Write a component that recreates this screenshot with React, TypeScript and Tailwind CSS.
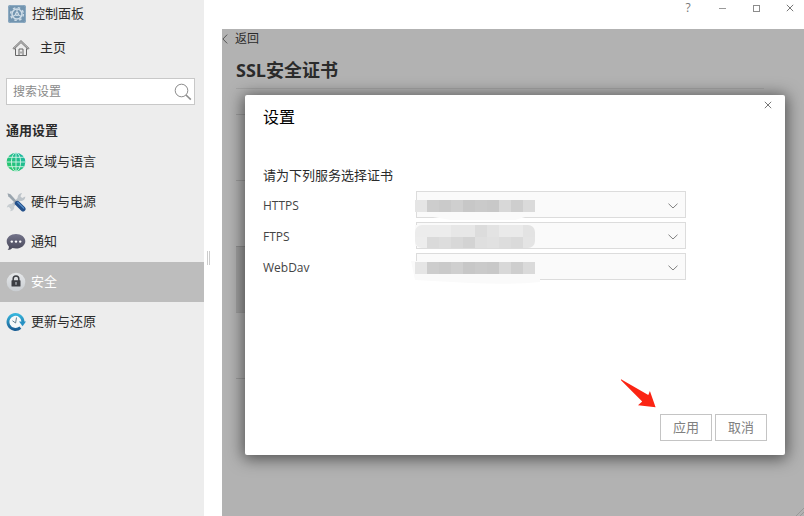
import React from "react";

function PanelIcon() {
  return (
    <svg className="size-[18px] shrink-0" viewBox="0 0 18 18" aria-hidden="true">
      <rect width="18" height="18" rx="2" fill="#7395b0" />
      <rect x="0.5" y="0.5" width="17" height="17" rx="2" fill="none" stroke="#8eabc2" />
      <g fill="none" stroke="#cfdde8">
        <circle cx="9" cy="9" r="5" strokeWidth="1.5" />
        <circle cx="9" cy="9" r="6.4" strokeWidth="1.4" strokeDasharray="2.5 2.53" />
        <path d="M9 9V4M9 9l-4.3 2.5M9 9l4.3 2.5" strokeWidth="1.1" />
      </g>
      <circle cx="9" cy="9" r="1.9" fill="#dbe6ee" />
      <circle cx="9" cy="9" r="0.8" fill="#5d84a4" />
    </svg>
  );
}

function HomeIcon() {
  return (
    <svg className="size-[18px] shrink-0" viewBox="0 0 18 18" fill="none" stroke="#666" strokeWidth="1" aria-hidden="true">
      <path d="M1 9.400 9 1.600l8 7.800-.9.900L9 3.500l-7.100 6.800z" />
      <path d="M3.500 9.500v7h3.500V10h4v6.500h3.500v-7M7 16.500h4M9 12.500v2" />
    </svg>
  );
}

function SearchIcon() {
  return (
    <svg className="mr-0.5 size-[18px] shrink-0" viewBox="0 0 18 18" fill="none" stroke="#8c8c8c" aria-hidden="true">
      <circle cx="7.5" cy="7.5" r="6.300" />
      <path d="m12 12 4.800 4.600" strokeWidth="1.600" />
    </svg>
  );
}

function GlobeIcon() {
  return (
    <svg className="size-5 shrink-0" viewBox="0 0 20 20" aria-hidden="true">
      <defs>
        <linearGradient id="globe" x1="0" y1="1" x2="1" y2="0">
          <stop offset="0" stopColor="#2bcb60" />
          <stop offset="1" stopColor="#1bb5ab" />
        </linearGradient>
      </defs>
      <circle cx="10" cy="10" r="9.300" fill="url(#globe)" />
      <g fill="none" stroke="#d5f3e6" strokeWidth="0.900">
        <ellipse cx="10" cy="10" rx="4.600" ry="9.300" />
        <path d="M10 .7v18.600M.7 10h18.600M2.200 5.300h15.600M2.200 14.700h15.600" />
      </g>
    </svg>
  );
}

function ToolsIcon() {
  return (
    <svg className="size-5 shrink-0" viewBox="0 0 20 20" aria-hidden="true">
      <path d="m4 16 10-10" stroke="#bcc3c9" strokeWidth="3.200" />
      <path d="M11.800 7c-.6-2.900 1.100-5.500 4.200-5.900l-1.600 3.100 1.700 1.700 3.200-1.400c.1 3-2.500 5-5.300 4.200z" fill="#bcc3c9" />
      <path d="M6.800 11.900c-2.900-.8-5.700.9-6 3.600l2.900-.8 1.500 1.600-1 2.900c2.800-.3 4.700-2.800 3.900-5.300z" fill="#c8ced2" />
      <path d="m1.500 1.300 3 1 7.200 7.900-1.700 1.700L2.300 4.300z" fill="#9aa5ae" />
      <path d="m11.300 11.300 5.700 5.600" stroke="#24508a" strokeWidth="5" strokeLinecap="round" />
      <path d="m11.800 10.400 5.900 5.700" stroke="#5a92cc" strokeWidth="1.300" strokeLinecap="round" />
    </svg>
  );
}

function ChatIcon() {
  return (
    <svg className="size-5 shrink-0" viewBox="0 0 20 20" aria-hidden="true">
      <defs>
        <linearGradient id="chat" x1="0" y1="0" x2="0" y2="1">
          <stop offset="0" stopColor="#73738a" />
          <stop offset="1" stopColor="#484859" />
        </linearGradient>
      </defs>
      <path d="M10 2c5.200 0 9.300 3.200 9.300 7.300s-4.100 7.300-9.300 7.300c-1.300 0-2.500-.2-3.600-.5C5.300 17.400 3.500 18.200 1.500 18.100c1.100-1 1.500-2.200 1.400-3.700C1.500 13 .7 11.300.7 9.300.7 5.200 4.800 2 10 2z" fill="url(#chat)" />
      <g fill="#fff">
        <circle cx="5.800" cy="9.600" r="1.200" />
        <circle cx="10" cy="9.600" r="1.200" />
        <circle cx="14.200" cy="9.600" r="1.200" />
      </g>
    </svg>
  );
}

function LockIcon() {
  return (
    <svg className="size-5 shrink-0" viewBox="0 0 20 20" aria-hidden="true">
      <defs>
        <linearGradient id="lock" x1="0" y1="0" x2="0" y2="1">
          <stop offset="0" stopColor="#e6e8ea" />
          <stop offset="1" stopColor="#c9cdd1" />
        </linearGradient>
      </defs>
      <circle cx="10" cy="10" r="9.300" fill="url(#lock)" />
      <path d="M7.200 9V6.800a2.800 2.800 0 0 1 5.600 0V9" fill="none" stroke="#3b3d42" strokeWidth="1.500" />
      <rect x="5.500" y="8.200" width="9" height="6.400" rx="0.600" fill="#3b3d42" />
      <path d="M10 10v2.800" stroke="#aeb2b8" strokeWidth="1.300" />
    </svg>
  );
}

function RestoreIcon() {
  return (
    <svg className="size-5 shrink-0" viewBox="0 0 20 20" aria-hidden="true">
      <defs>
        <linearGradient id="restore" x1="0" y1="0" x2="0" y2="1">
          <stop offset="0" stopColor="#35b4dc" />
          <stop offset="1" stopColor="#1c5f95" />
        </linearGradient>
      </defs>
      <circle cx="9.500" cy="10" r="6.500" fill="#f6f8f9" />
      <path d="M14.400 15.600A7.500 7.500 0 1 1 17 10" fill="none" stroke="url(#restore)" strokeWidth="2.900" />
      <path d="M13 9.600h7l-3.400 4.600z" fill="#2791c4" />
      <path d="M10.500 5.500 9.600 11 6.500 8.800" fill="none" stroke="#64808f" strokeWidth="1" />
    </svg>
  );
}

function CloseGlyph() {
  return (
    <svg className="size-2" viewBox="0 0 8 8" fill="none" stroke="#777" aria-hidden="true">
      <path d="m.8.8 6.400 6.400M7.200.8.8 7.200" />
    </svg>
  );
}

const sections = [
  { label: "区域与语言", icon: <GlobeIcon /> },
  { label: "硬件与电源", icon: <ToolsIcon /> },
  { label: "通知", icon: <ChatIcon /> },
  { label: "安全", icon: <LockIcon />, active: true },
  { label: "更新与还原", icon: <RestoreIcon /> },
];

function Sidebar() {
  return (
    <aside className="w-[204px] shrink-0 bg-[#ededed]">
      <div className="flex h-7 items-center gap-1.5 pl-2">
        <PanelIcon />
        <span>控制面板</span>
      </div>
      <a href="#home" className="flex h-10 items-center gap-2.5 pl-3">
        <HomeIcon />
        <span>主页</span>
      </a>
      <label className="mt-2.5 mr-[9px] ml-1.5 flex h-[27px] items-center border border-[#c8c8c8] bg-white pl-1.5">
        <input
          type="text"
          aria-label="搜索设置"
          placeholder="搜索设置"
          className="min-w-0 flex-1 bg-transparent text-xs outline-none placeholder:text-[#8a8a8a]"
        />
        <SearchIcon />
      </label>
      <h2 className="mt-[15px] h-5 pl-1.5 font-semibold leading-5">通用设置</h2>
      <nav className="pt-0.5">
        {sections.map((s) => (
          <a
            key={s.label}
            href="#section"
            aria-current={s.active ? "page" : undefined}
            className={
              s.active
                ? "flex h-10 items-center gap-[5px] bg-[#bdbdbd] pl-1.5 text-white"
                : "flex h-10 items-center gap-[5px] pl-1.5"
            }
          >
            {s.icon}
            <span>{s.label}</span>
          </a>
        ))}
      </nav>
    </aside>
  );
}

function TitleBar() {
  return (
    <header className="flex h-[29px] items-start justify-end gap-[18px] pr-1.5">
      <button type="button" aria-label="帮助" className="flex size-4 items-center justify-center text-xs text-[#777]">
        ?
      </button>
      <button type="button" aria-label="最小化" className="flex size-4 items-center justify-center">
        <span className="h-px w-[7px] bg-[#999]" />
      </button>
      <button type="button" aria-label="最大化" className="flex size-4 items-center justify-center">
        <span className="size-[7px] border border-[#8c8c8c]" />
      </button>
      <button type="button" aria-label="关闭" className="flex size-4 items-center justify-center">
        <CloseGlyph />
      </button>
    </header>
  );
}

type Cell = [number, number, number, number, string];

const lineMask: Cell[] = [
  [0, 9, 12, 12, "#e5e5e5"],
  [12, 9, 12, 12, "#cdcdcd"],
  [24, 9, 12, 12, "#cacaca"],
  [36, 9, 12, 12, "#cfcfcf"],
  [48, 9, 12, 12, "#c7c7c7"],
  [60, 9, 12, 12, "#cacaca"],
  [72, 9, 12, 12, "#c8c8c8"],
  [84, 9, 12, 12, "#d8d8d8"],
  [96, 9, 12, 12, "#cecece"],
  [108, 9, 12, 12, "#dadada"],
];

const blockMask: Cell[] = [
  [0, 3, 36, 12, "#ececec"],
  [36, 3, 24, 12, "#e7e7e7"],
  [60, 3, 12, 12, "#dcdcdc"],
  [72, 3, 12, 12, "#e3e3e3"],
  [84, 3, 24, 12, "#eaeaea"],
  [108, 3, 12, 12, "#e3e3e3"],
  [0, 15, 12, 11, "#ededed"],
  [12, 15, 12, 11, "#dadada"],
  [24, 15, 12, 11, "#dddddd"],
  [36, 15, 12, 11, "#d8d8d8"],
  [48, 15, 12, 11, "#d3d3d3"],
  [60, 15, 12, 11, "#dfdfdf"],
  [72, 15, 12, 11, "#e1e1e1"],
  [84, 15, 12, 11, "#dddddd"],
  [96, 15, 12, 11, "#dadada"],
  [108, 15, 12, 11, "#e4e4e4"],
];

const services = [
  { id: "https", name: "HTTPS", cells: lineMask, radius: 0, smear: "M18 26h92l-10 3H36z" },
  { id: "ftps", name: "FTPS", cells: blockMask, radius: 7, smear: "M0 3h3v21H0z" },
  { id: "webdav", name: "WebDav", cells: lineMask, radius: 0, smear: "M-4 8h6v18h123v3q-30 3-70 1l-55-3z" },
];

function ServiceRow({ service }: { service: (typeof services)[number] }) {
  return (
    <div className="flex items-center">
      <label htmlFor={service.id} className="w-[153px] shrink-0 pt-0.5 text-xs text-[#444]">
        {service.name}
      </label>
      <div className="relative w-[270px]">
        <select
          id={service.id}
          className="block h-[27px] w-full appearance-none rounded-none border border-[#dcdcdc] bg-[#fafafa] outline-none"
        >
          <option value="" aria-label="证书" />
        </select>
        <svg className="pointer-events-none absolute top-0 -left-px h-[27px] w-[124px] overflow-visible" viewBox="0 0 124 27" aria-hidden="true">
          <clipPath id={`${service.id}-mask`}>
            <rect x="0" y="3" width="120" height="23" rx={service.radius} />
          </clipPath>
          <path d={service.smear} fill="#fafafa" />
          <g clipPath={`url(#${service.id}-mask)`}>
            {service.cells.map(([x, y, w, h, fill]) => (
              <rect key={`${x}-${y}`} x={x} y={y} width={w} height={h} fill={fill} />
            ))}
          </g>
        </svg>
        <svg className="pointer-events-none absolute top-3 right-2 h-1.5 w-2.5" viewBox="0 0 10 6" fill="none" stroke="#808080" aria-hidden="true">
          <path d="m.5.7 4.500 4.300L9.500.7" />
        </svg>
      </div>
    </div>
  );
}

function SettingsDialog() {
  return (
    <section
      role="dialog"
      aria-labelledby="dialog-title"
      className="relative flex h-[360px] w-[540px] flex-col rounded-xs bg-white px-[18px] pb-3.5 shadow-[0_2px_16px_2px_rgba(0,0,0,0.55)]"
    >
      <button type="button" aria-label="关闭" className="absolute top-0.5 right-[9px] flex size-4 items-center justify-center">
        <CloseGlyph />
      </button>
      <h2 id="dialog-title" className="mt-2.5 text-base leading-6 text-black">
        设置
      </h2>
      <p className="mt-9 leading-5">请为下列服务选择证书</p>
      <div className="mt-1.5 flex flex-col gap-1">
        {services.map((s) => (
          <ServiceRow key={s.id} service={s} />
        ))}
      </div>
      <div className="relative mt-auto flex justify-end gap-[3px]">
        <svg className="absolute right-[111px] bottom-[33px] h-[30px] w-9" viewBox="0 0 36 30" aria-hidden="true">
          <path d="M1 2.300C.5 1.600 1.400 1.300 2.300 1.900L28.300 17l1.600-4.100L35.600 29.200 18 27.200l4.200-3.800z" fill="#fb2413" />
        </svg>
        <button type="button" className="h-[27px] w-[52px] border border-[#c4c4c4] text-[#808080]">
          应用
        </button>
        <button type="button" className="h-[27px] w-[52px] border border-[#c4c4c4] text-[#808080]">
          取消
        </button>
      </div>
    </section>
  );
}

export default function App() {
  return (
    <div className="flex min-h-screen bg-white font-['Open_Sans','Noto_Sans_CJK_SC',sans-serif] text-[13px] text-[#2b2b2b]">
      <Sidebar />
      <div className="flex w-[18px] shrink-0 items-center pl-[3px]">
        <span className="h-3.5 w-[3px] border-x border-[#cccccc]" />
      </div>
      <div className="flex min-w-0 flex-1 flex-col">
        <TitleBar />
        <main className="relative flex-1 overflow-hidden bg-[#b2b2b2]">
          <a href="#back" className="flex h-5 w-fit items-center gap-[7px] text-xs">
            <svg className="h-2.5 w-1.5" viewBox="0 0 6 10" fill="none" stroke="#555" aria-hidden="true">
              <path d="M5.200.6.900 5l4.300 4.400" />
            </svg>
            返回
          </a>
          <h1 className="mt-2 h-[31px] pl-3.5 text-lg font-bold leading-[26px]">SSL安全证书</h1>
          <div className="mr-10 ml-3.5 border-t border-[#a4a4a4] pt-[25px]">
            <div className="h-[66px] border-t border-[#9c9c9c]" />
            <div className="h-[66px] border-t border-[#9c9c9c]" />
            <div className="h-[66px] border-t border-[#8f8f8f] bg-[#a0a0a0]" />
            <div className="h-[66px] border-t border-[#9c9c9c]" />
            <div className="border-t border-[#9c9c9c]" />
          </div>
          <div className="absolute inset-0 flex items-start justify-center pt-[66px] pl-1">
            <SettingsDialog />
          </div>
          <svg className="absolute right-0 bottom-0 size-2" viewBox="0 0 8 8" stroke="#999" aria-hidden="true">
            <path d="M0 8 8 0M4 8l4-4" />
          </svg>
        </main>
      </div>
    </div>
  );
}
